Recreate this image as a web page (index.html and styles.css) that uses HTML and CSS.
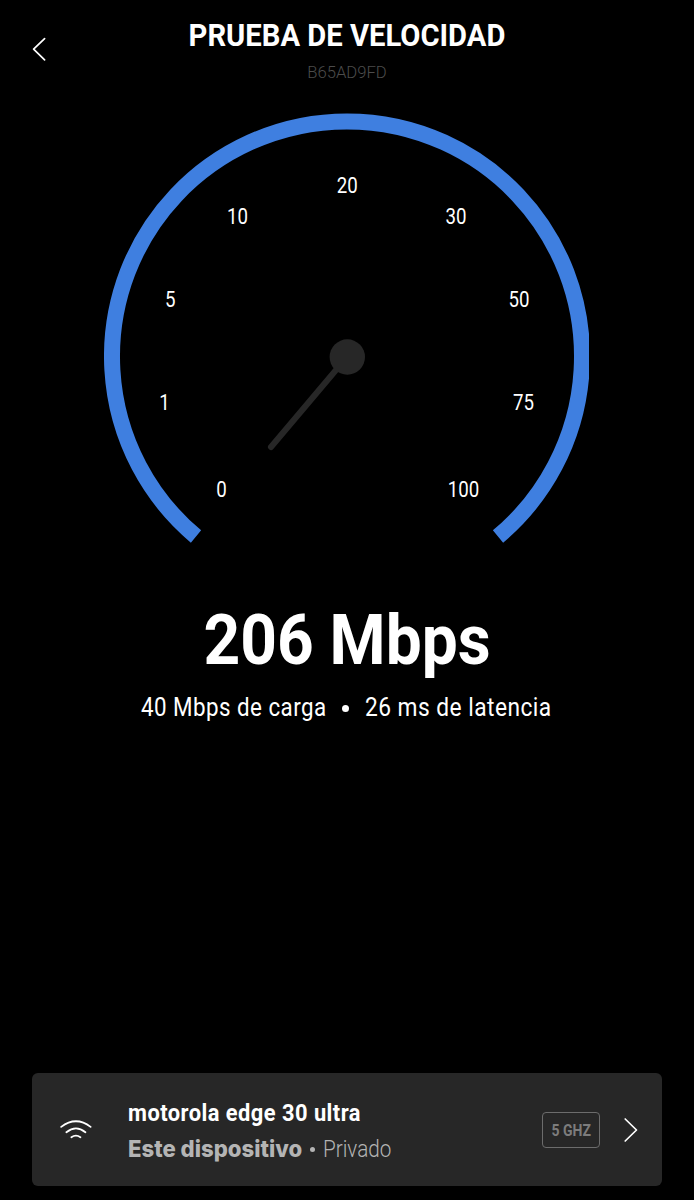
FILE: index.html
```
<!DOCTYPE html>
<html lang="es">
<head>
    <meta charset="UTF-8">
    <title>Prueba de velocidad</title>
    <link rel="stylesheet" href="styles.css">
</head>
<body>
    <div class="screen">
        <header class="header">
            <svg class="back" width="16" height="26" viewBox="0 0 16 26">
                <path d="M12.6 2.7L1.6 13.2L12.6 23.8"/>
            </svg>
            <div class="titles">
                <h1>PRUEBA DE VELOCIDAD</h1>
                <p class="serial">B65AD9FD</p>
            </div>
        </header>

        <svg class="gauge" width="485" height="432" viewBox="0 -0.5 485 432">
            <path class="arc" d="M92 423A235 235 0 1 1 394 423"/>
            <line class="needle" x1="243" y1="243.5" x2="167" y2="333.5"/>
            <circle class="knob" cx="243.3" cy="243.5" r="17.7"/>
            <g class="ticks">
                <text transform="translate(117.5 383.6) scale(.83 1)">0</text>
                <text transform="translate(60.5 296.4) scale(.83 1)">1</text>
                <text transform="translate(66.3 193) scale(.83 1)">5</text>
                <text transform="translate(133.5 110.8) scale(.83 1)">10</text>
                <text transform="translate(243.3 79.3) scale(.83 1)">20</text>
                <text transform="translate(352 110.8) scale(.83 1)">30</text>
                <text transform="translate(415 193) scale(.83 1)">50</text>
                <text transform="translate(419.5 296.4) scale(.83 1)">75</text>
                <text transform="translate(359.5 383.6) scale(.83 1)">100</text>
            </g>
        </svg>

        <div class="result">
            <p class="speed">206 Mbps</p>
            <div class="details">
                <span class="upload">40 Mbps de carga</span>
                <span class="dot"></span>
                <span class="latency">26 ms de latencia</span>
            </div>
        </div>

        <div class="device">
            <svg class="wifi" width="34" height="24" viewBox="0 0 34 24">
                <path d="M2.2 8.9Q17 -2.4 31.6 8.9M7.4 14.2Q17 6.6 26.4 14.2M12.4 19.2Q17 16 21.4 19.2"/>
            </svg>
            <div class="info">
                <p class="name">motorola edge 30 ultra</p>
                <p class="meta">
                    <b>Este dispositivo</b>
                    <span class="dot small"></span>
                    <span class="network">Privado</span>
                </p>
            </div>
            <div class="band"><span>5 GHZ</span></div>
            <svg class="next" width="16" height="26" viewBox="0 0 16 26">
                <path d="M3.2 2L14.5 13L3.2 24"/>
            </svg>
        </div>
    </div>
</body>
</html>
```
FILE: styles.css
```
* {
    box-sizing: border-box;
}
body {
    margin: 0;
    background-color: #000;
    color: #fff;
    font-family: Roboto, "Liberation Sans", sans-serif;
}
h1, p {
    margin: 0;
}
.screen {
    display: flex;
    flex-direction: column;
    height: 1200px;
    padding: 0 32px 14px;
}
.header {
    display: flex;
    align-items: flex-start;
    height: 113px;
}
.back, .next {
    fill: none;
    stroke: #fff;
    stroke-width: 1.7;
    stroke-linecap: round;
    stroke-linejoin: round;
}
.back {
    margin-top: 36px;
}
.titles {
    flex: 1;
    margin-right: 16px;
    padding-top: 17px;
    text-align: center;
}
h1 {
    font-size: 31.5px;
    line-height: 38px;
    white-space: nowrap;
    transform: scaleX(0.927);
}
.serial {
    margin-top: 8px;
    color: #4c4c4c;
    font-size: 16px;
    font-weight: 300;
    line-height: 20px;
    transform: scaleX(1.04);
}
.gauge {
    display: block;
    flex: none;
    margin-left: 72px;
}
.arc {
    fill: none;
    stroke: #3f7fe0;
    stroke-width: 16;
}
.needle {
    stroke: #272727;
    stroke-width: 6;
    stroke-linecap: round;
}
.knob {
    fill: #272727;
}
.ticks {
    fill: #fff;
    font-size: 22.5px;
    text-anchor: middle;
}
.result {
    text-align: center;
    padding-top: 55px;
}
.speed {
    font-size: 70px;
    line-height: 80px;
    font-weight: bold;
    transform: scaleX(0.915);
}
.details {
    display: flex;
    align-items: center;
    justify-content: center;
    margin-top: 12px;
    font-size: 25px;
    line-height: 32px;
}
.upload, .latency {
    flex: none;
    white-space: nowrap;
    letter-spacing: 0.5px;
    text-align: left;
    transform-origin: left;
}
.upload {
    width: 185px;
    transform: scaleX(0.895);
}
.latency {
    width: 188px;
    transform: scaleX(0.91);
}
.dot {
    width: 7px;
    height: 7px;
    margin: 0 16px;
    border-radius: 50%;
    background-color: #fff;
}
.device {
    display: flex;
    align-items: center;
    height: 113px;
    margin-top: auto;
    padding: 0 24px 0 27px;
    border-radius: 6px;
    background-color: #272727;
}
.wifi {
    fill: none;
    stroke: #fff;
    stroke-width: 1.8;
    stroke-linecap: round;
}
.info {
    width: 415px;
    padding: 4px 0 0 35px;
}
.name {
    font-size: 23.5px;
    line-height: 35px;
    font-weight: bold;
    letter-spacing: 0.5px;
    white-space: nowrap;
    transform-origin: left;
    transform: scaleX(0.93);
}
.meta {
    display: flex;
    align-items: center;
    color: #b4b4b4;
    font-size: 23px;
    line-height: 36px;
}
.meta b {
    width: 174px;
    font-family: Inter, Roboto, sans-serif;
    font-weight: 800;
    white-space: nowrap;
    transform-origin: left;
    transform: scaleX(0.963);
}
.small {
    width: 5px;
    height: 5px;
    margin: 0 8px;
    background-color: #b4b4b4;
}
.network {
    font-weight: 300;
    padding-top: 1px;
    transform-origin: left;
    transform: scaleX(0.9);
}
.band {
    display: flex;
    align-items: center;
    justify-content: center;
    width: 58px;
    height: 36px;
    margin-left: 34px;
    border: 1px solid #6c6c6c;
    border-radius: 4px;
    color: #7c7c7c;
    font-size: 16.5px;
    font-weight: bold;
}
.band span {
    padding-top: 1px;
    white-space: nowrap;
    transform: scaleX(0.85);
}
.next {
    margin-left: auto;
}
```
